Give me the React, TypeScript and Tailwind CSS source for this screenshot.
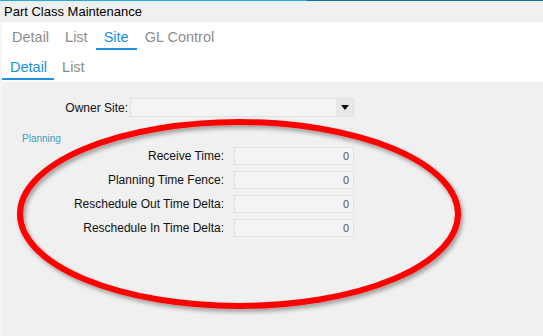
import React from 'react';

const font = { fontFamily: '"Liberation Sans", Arial, sans-serif' };

function Tab({ label, active, className = '' }: { label: string; active?: boolean; className?: string }) {
  return (
    <div className={`relative flex h-full items-center px-2 ${className}`}>
      <span className={`text-[14.5px] leading-none ${active ? 'text-[#1a8fe3]' : 'text-[#8c8c8c]'}`}>{label}</span>
      {active && <div className="absolute bottom-[2px] left-0 right-0 h-[2px] bg-[#1a8fe3]" />}
    </div>
  );
}

function NumberRow({ label }: { label: string }) {
  return (
    <div className="flex h-[18px] items-center">
      <div className="w-[222px] text-right text-[12px] text-[#111]">{label}</div>
      <div className="ml-[10px] flex h-[18px] w-[120px] items-center justify-end border border-[#e0e0e0] bg-[#f4f4f4] pr-[4px] text-[11px] text-[#555]">
        0
      </div>
    </div>
  );
}

export default function App() {
  return (
    <div className="relative flex h-[336px] w-[543px] flex-col overflow-hidden bg-[#f0f0f0]" style={font}>
      {/* top accent line */}
      <div className="flex h-[1px]">
        <div className="w-[307px] bg-[#2aa6df]" />
        <div className="flex-1 bg-[#0b6db0]" />
      </div>

      <div className="flex h-[21px] items-center pl-[4px] text-[13px] text-black">Part Class Maintenance</div>

      <div className="flex flex-1 flex-col border-l-2 border-[#f6f6f6]">
        <div className="flex h-[60px] flex-col bg-white">
          <div className="flex h-[30px] pl-[2px] pt-[1px]">
            <Tab label="Detail" />
            <Tab label="List" />
            <Tab label="Site" active />
            <Tab label="GL Control" />
          </div>
          <div className="flex h-[30px] pt-[1px]">
            <Tab label="Detail" active className="pr-[7px]" />
            <Tab label="List" />
          </div>
        </div>

        <div className="flex flex-1 flex-col pt-[16px]">
          <div className="flex h-[19px] items-center">
            <div className="w-[126px] text-right text-[12px] text-[#111]">Owner Site:</div>
            <div className="ml-[2px] flex h-[19px] w-[224px] border border-[#e0e0e0] bg-[#f4f4f4]">
              <div className="flex-1" />
              <div className="flex w-[17px] items-center justify-center bg-[#e8e8e8]">
                <svg width="8" height="5" viewBox="0 0 8 5">
                  <path d="M0 0H8L4 5Z" fill="#111" />
                </svg>
              </div>
            </div>
          </div>

          <div className="mt-[17px] pl-[20px] text-[10px] leading-none text-[#3b9cc2]">Planning</div>

          <div className="mt-[3px] flex flex-col gap-[6px]">
            <NumberRow label="Receive Time:" />
            <NumberRow label="Planning Time Fence:" />
            <NumberRow label="Reschedule Out Time Delta:" />
            <NumberRow label="Reschedule In Time Delta:" />
          </div>
        </div>
      </div>

      {/* red annotation ellipse */}
      <svg className="pointer-events-none absolute left-0 top-0" width="543" height="336" viewBox="0 0 543 336">
        <defs>
          <filter id="sh" x="-10%" y="-10%" width="120%" height="130%">
            <feDropShadow dx="2" dy="3" stdDeviation="2" floodColor="#000" floodOpacity="0.35" />
          </filter>
        </defs>
        <ellipse cx="239" cy="214" rx="219" ry="92" fill="none" stroke="#ff0000" strokeWidth="6" filter="url(#sh)" />
      </svg>
    </div>
  );
}
